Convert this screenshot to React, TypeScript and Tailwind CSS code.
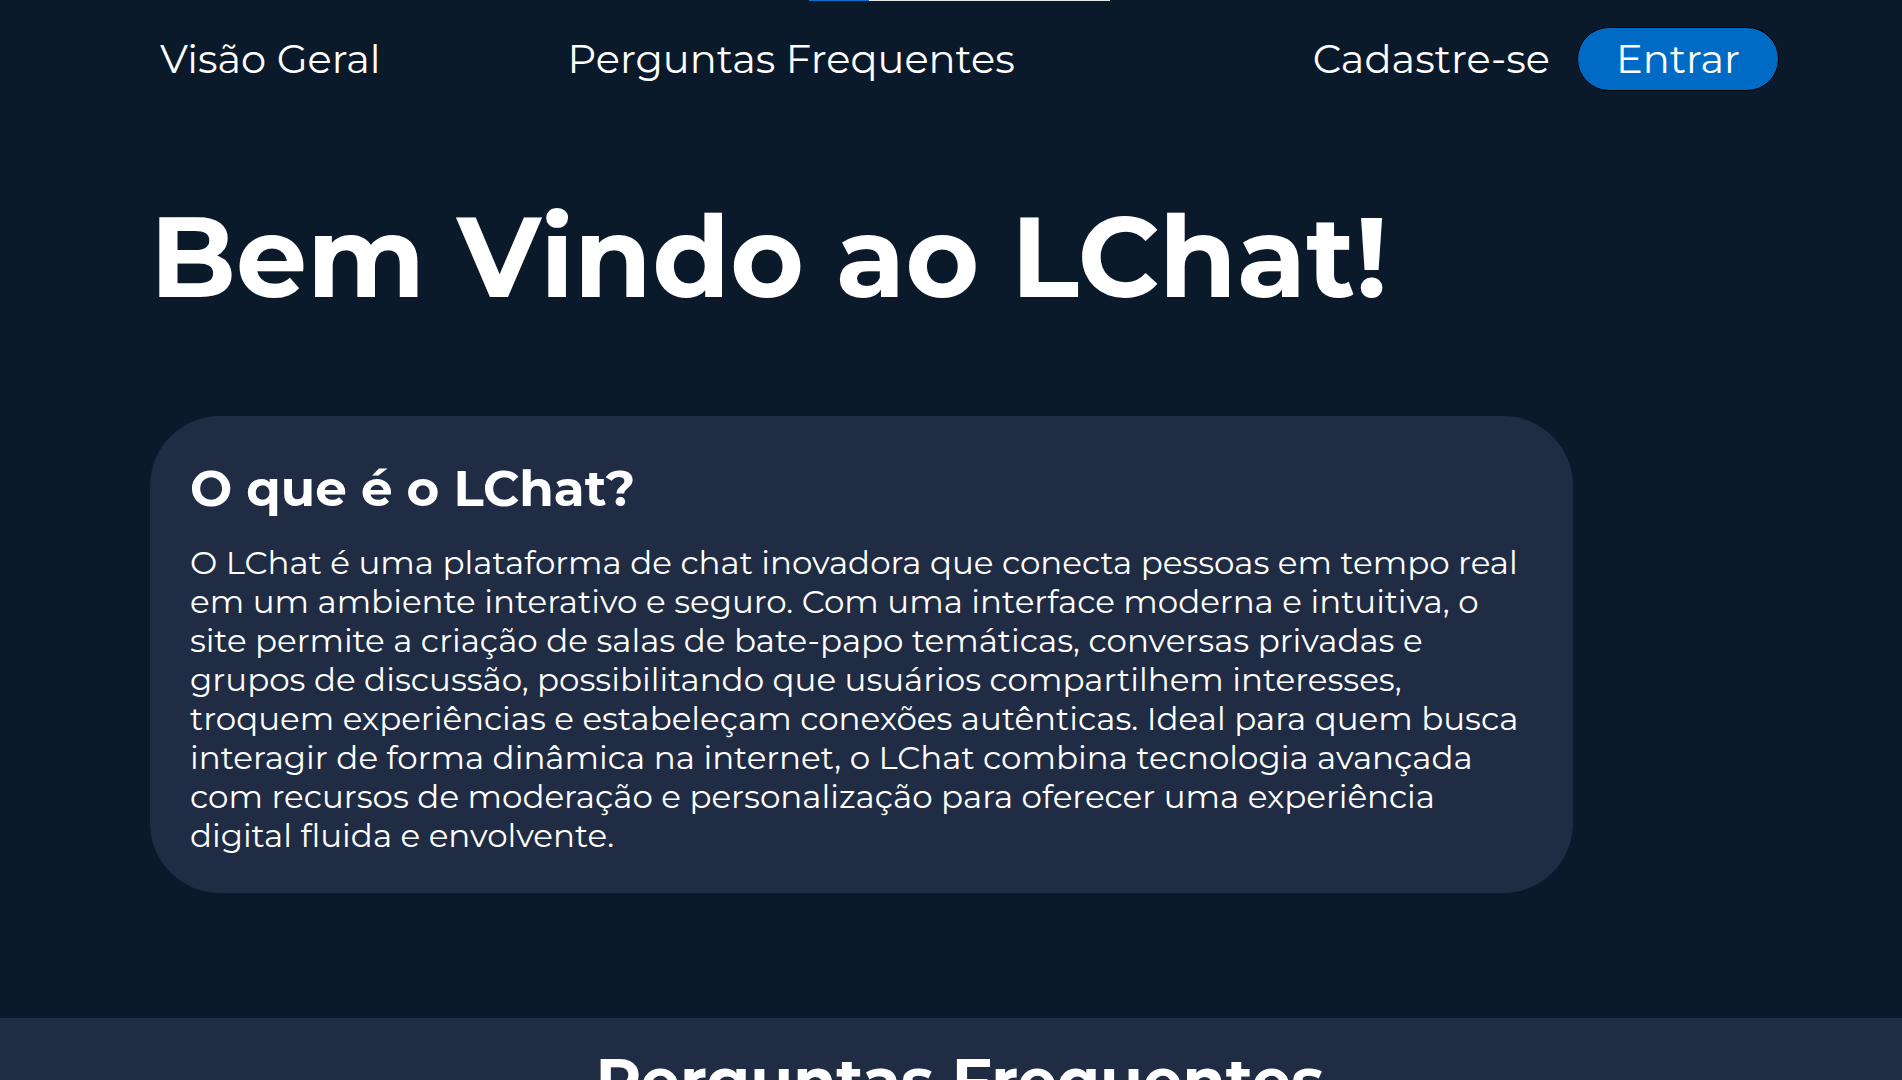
import React from "react";

const lines = [
  "O LChat é uma plataforma de chat inovadora que conecta pessoas em tempo real",
  "em um ambiente interativo e seguro. Com uma interface moderna e intuitiva, o",
  "site permite a criação de salas de bate-papo temáticas, conversas privadas e",
  "grupos de discussão, possibilitando que usuários compartilhem interesses,",
  "troquem experiências e estabeleçam conexões autênticas. Ideal para quem busca",
  "interagir de forma dinâmica na internet, o LChat combina tecnologia avançada",
  "com recursos de moderação e personalização para oferecer uma experiência",
  "digital fluida e envolvente.",
];

export default function App() {
  return (
    <div className="min-h-screen overflow-hidden bg-[#0b1a2b] text-white font-['Montserrat','DejaVu_Sans',sans-serif]">
      {/* progress strip */}
      <div className="flex h-px">
        <div className="ml-[809px] w-[60px] bg-[#0a6fd0]" />
        <div className="w-[241px] bg-[#e6e6e6]" />
      </div>

      <nav className="flex items-center justify-between pl-[160px] pr-[123px] pt-[26px]">
        <div className="flex items-center gap-[187px] text-[40px]">
          <a href="#visao">Visão Geral</a>
          <a href="#faq">Perguntas Frequentes</a>
        </div>
        <div className="flex items-center gap-[27px]">
          <a href="#cadastro" className="text-[40px]">
            Cadastre-se
          </a>
          <button className="flex h-[64px] w-[202px] items-center justify-center rounded-full border border-black bg-[#006bc4] text-[40px] text-white">
            Entrar
          </button>
        </div>
      </nav>

      <main className="px-[150px]">
        <h1 className="mt-[110px] text-[112.5px] font-bold leading-none">
          Bem Vindo ao LChat!
        </h1>

        <section
          id="visao"
          className="mt-[102px] w-[1423px] rounded-[70px] bg-[#1f2c44] px-[40px] pt-[48px] pb-[38px]"
        >
          <h2 className="text-[50px] font-bold leading-none">O que é o LChat?</h2>
          <p className="mt-[29px] text-[32.5px] leading-[39px]">
            {lines.map((l) => (
              <span key={l} className="block whitespace-nowrap">
                {l}
              </span>
            ))}
          </p>
        </section>
      </main>

      <section id="faq" className="mt-[125px] flex justify-center bg-[#1f2c44] pl-[18px] pt-[32px] pb-[40px]">
        <h2 className="text-[62.5px] font-bold leading-none">Perguntas Frequentes</h2>
      </section>
    </div>
  );
}
